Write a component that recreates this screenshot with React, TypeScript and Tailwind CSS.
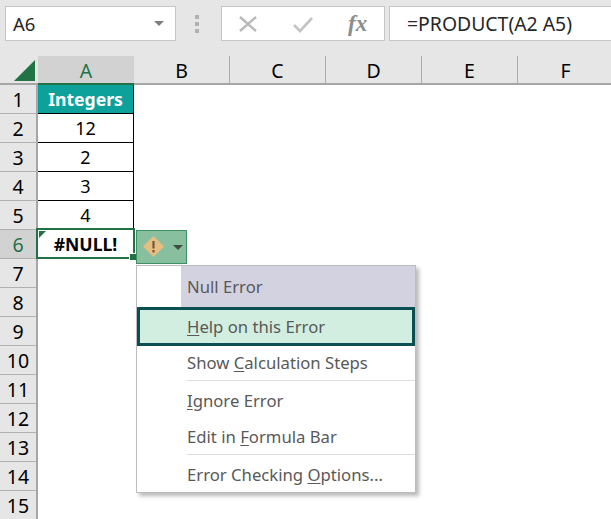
const columns = ["B", "C", "D", "E", "F"];
const rows = [
  { n: 1, value: "Integers" },
  { n: 2, value: "12" },
  { n: 3, value: "2" },
  { n: 4, value: "3" },
  { n: 5, value: "4" },
  { n: 6, value: "#NULL!" },
  ...[7, 8, 9, 10, 11, 12, 13, 14, 15].map((n) => ({ n, value: "" })),
];

function FormulaBar() {
  return (
    <div className="flex h-[56px] shrink-0 bg-[#e6e6e6] pt-[6px] pb-[15px]">
      <div className="ml-[5px] flex w-[171px] shrink-0 items-center justify-between border border-[#c6c6c6] bg-white pl-[7px] pr-[10px] text-[18.5px] text-[#262626]">
        <span>A6</span>
        <span className="mr-[1px] h-0 w-0 border-x-[5px] border-t-[5px] border-x-transparent border-t-[#7f7f7f]" />
      </div>
      <div className="ml-[19px] flex w-[5px] shrink-0 flex-col justify-center gap-[3px]">
        <span className="h-[4px] w-[4px] bg-[#b1b1b1]" />
        <span className="h-[4px] w-[4px] bg-[#b1b1b1]" />
        <span className="h-[4px] w-[4px] bg-[#b1b1b1]" />
      </div>
      <div className="ml-[21px] flex w-[164px] shrink-0 items-center border border-[#c6c6c6] bg-white">
        <svg width="20" height="20" viewBox="0 0 20 20" className="ml-[16px]">
          <path d="M2 3 L18 17 M18 3 L2 17" stroke="#b9b9b9" strokeWidth="2.4" fill="none" />
        </svg>
        <svg width="22" height="20" viewBox="0 0 22 20" className="ml-[34px]">
          <path d="M2 11 L8 17 L20 4" stroke="#c4c4c4" strokeWidth="2.6" fill="none" />
        </svg>
        <span className="ml-[34px] font-['Liberation_Serif',serif] text-[23px] font-bold italic leading-none text-[#8c8c8c]">
          fx
        </span>
      </div>
      <div className="ml-[4px] flex flex-1 items-center border border-r-0 border-[#c6c6c6] bg-white pl-[17px] text-[19.4px] text-[#262626]">
        =PRODUCT(A2 A5)
      </div>
    </div>
  );
}

function ColumnHeaders() {
  return (
    <div className="flex h-[29px] shrink-0 border-b-2 border-[#a6a6a6] bg-[#e6e6e6] text-[19.5px] leading-none text-black">
      <div className="flex w-[38px] shrink-0 items-end justify-end pb-[2px] pr-[3px]">
        <svg width="21" height="21" viewBox="0 0 21 21">
          <path d="M21 0 V21 H0 Z" fill="#217346" />
        </svg>
      </div>
      <div className="-mb-[2px] flex w-[96px] shrink-0 items-center justify-center border-b-2 border-[#217346] bg-[#d2d2d2] pt-[2px] text-[#217346]">
        A
      </div>
      {columns.map((c) => (
        <div key={c} className="flex w-[96px] shrink-0 items-center justify-center border-r border-[#ababab] pt-[2px]">
          {c}
        </div>
      ))}
    </div>
  );
}

function Row({ n, value }: { n: number; value: string }) {
  const selected = n === 6;
  const isHeader = n === 1;
  const bordered = n >= 2 && n <= 5;
  return (
    <div className="flex h-[29px] shrink-0">
      <div
        className={`flex w-[38px] shrink-0 items-center justify-center border-b border-r-2 border-b-[#b1b1b1] border-r-[#a6a6a6] pt-px text-[19.5px] ${
          selected ? "bg-[#d2d2d2] text-[#217346]" : "bg-[#e6e6e6] text-black"
        }`}
      >
        {n}
      </div>
      {isHeader && (
        <div className="flex w-[96px] items-center justify-center border-r border-b border-black bg-[#0ca19a] pt-px text-[17.6px] font-bold text-white">
          {value}
        </div>
      )}
      {bordered && (
        <div className="flex w-[96px] items-center justify-center border-r border-b border-black pt-px text-[18px] text-black">
          {value}
        </div>
      )}
      {selected && (
        <div className="relative -mt-[2px] -ml-[2px] flex h-[31px] w-[99px] shrink-0 items-center justify-center border-2 border-[#217346] pt-px text-[17.6px] font-bold text-black">
          {value}
          <span className="absolute left-px top-px h-0 w-0 border-r-[7px] border-t-[7px] border-r-transparent border-t-[#217346]" />
          <span className="absolute -bottom-[4px] -right-[4px] h-[8px] w-[8px] border border-white bg-[#217346]" />
        </div>
      )}
    </div>
  );
}

function MenuItem({ before = "", mnemonic = "", after }: { before?: string; mnemonic?: string; after: string }) {
  return (
    <span className="whitespace-pre">
      {before}
      {mnemonic && <u className="underline-offset-2">{mnemonic}</u>}
      {after}
    </span>
  );
}

function ErrorMenu() {
  return (
    <div className="absolute left-[136px] top-[230px] flex flex-col items-start">
      <div className="flex h-[34px] w-[51px] items-center border border-[#3f8f63] bg-[#88bf9f] pl-[5px]">
        <svg width="24" height="24" viewBox="0 0 24 24">
          <path d="M11.5 1 L22 11.5 L11.5 22 L1 11.5 Z" fill="#e8bd80" />
          <path d="M11.5 6 V13.5" stroke="#6a5a45" strokeWidth="2.2" />
          <path d="M11.5 15 V17.5" stroke="#6a5a45" strokeWidth="2.2" />
        </svg>
        <span className="ml-[7px] h-0 w-0 border-x-[5px] border-t-[5px] border-x-transparent border-t-[#3f4f45]" />
      </div>
      <div className="mt-[1px] w-[280px] border border-[#bdbdbd] bg-white text-[16.7px] leading-none text-[#595959] shadow-[3px_3px_4px_rgba(0,0,0,0.28)]">
        <div className="ml-[44px] flex h-[41px] items-center bg-[#d3d2e1] pl-[6px] pt-[2px]">Null Error</div>
        <div className="flex h-[39px] items-center border-[3px] border-[#0b4f52] bg-[#d2eee0] pl-[47px] pt-[2px]">
          <MenuItem mnemonic="H" after="elp on this Error" />
        </div>
        <div className="flex h-[34px] items-center pl-[50px]">
          <MenuItem before="Show " mnemonic="C" after="alculation Steps" />
        </div>
        <div className="ml-[50px] h-px bg-[#dedede]" />
        <div className="flex h-[37px] items-center pl-[50px] pt-[3px]">
          <MenuItem mnemonic="I" after="gnore Error" />
        </div>
        <div className="flex h-[36px] items-center pl-[50px] pt-[2px]">
          <MenuItem before="Edit in " mnemonic="F" after="ormula Bar" />
        </div>
        <div className="ml-[50px] h-px bg-[#dedede]" />
        <div className="flex h-[37px] items-center pl-[50px] pt-[3px]">
          <MenuItem before="Error Checking " mnemonic="O" after="ptions..." />
        </div>
      </div>
    </div>
  );
}

export default function App() {
  return (
    <div className="relative flex h-[519px] w-[611px] flex-col overflow-hidden bg-white font-['Noto_Sans',sans-serif]">
      <FormulaBar />
      <ColumnHeaders />
      {rows.map((r) => (
        <Row key={r.n} n={r.n} value={r.value} />
      ))}
      <ErrorMenu />
    </div>
  );
}
